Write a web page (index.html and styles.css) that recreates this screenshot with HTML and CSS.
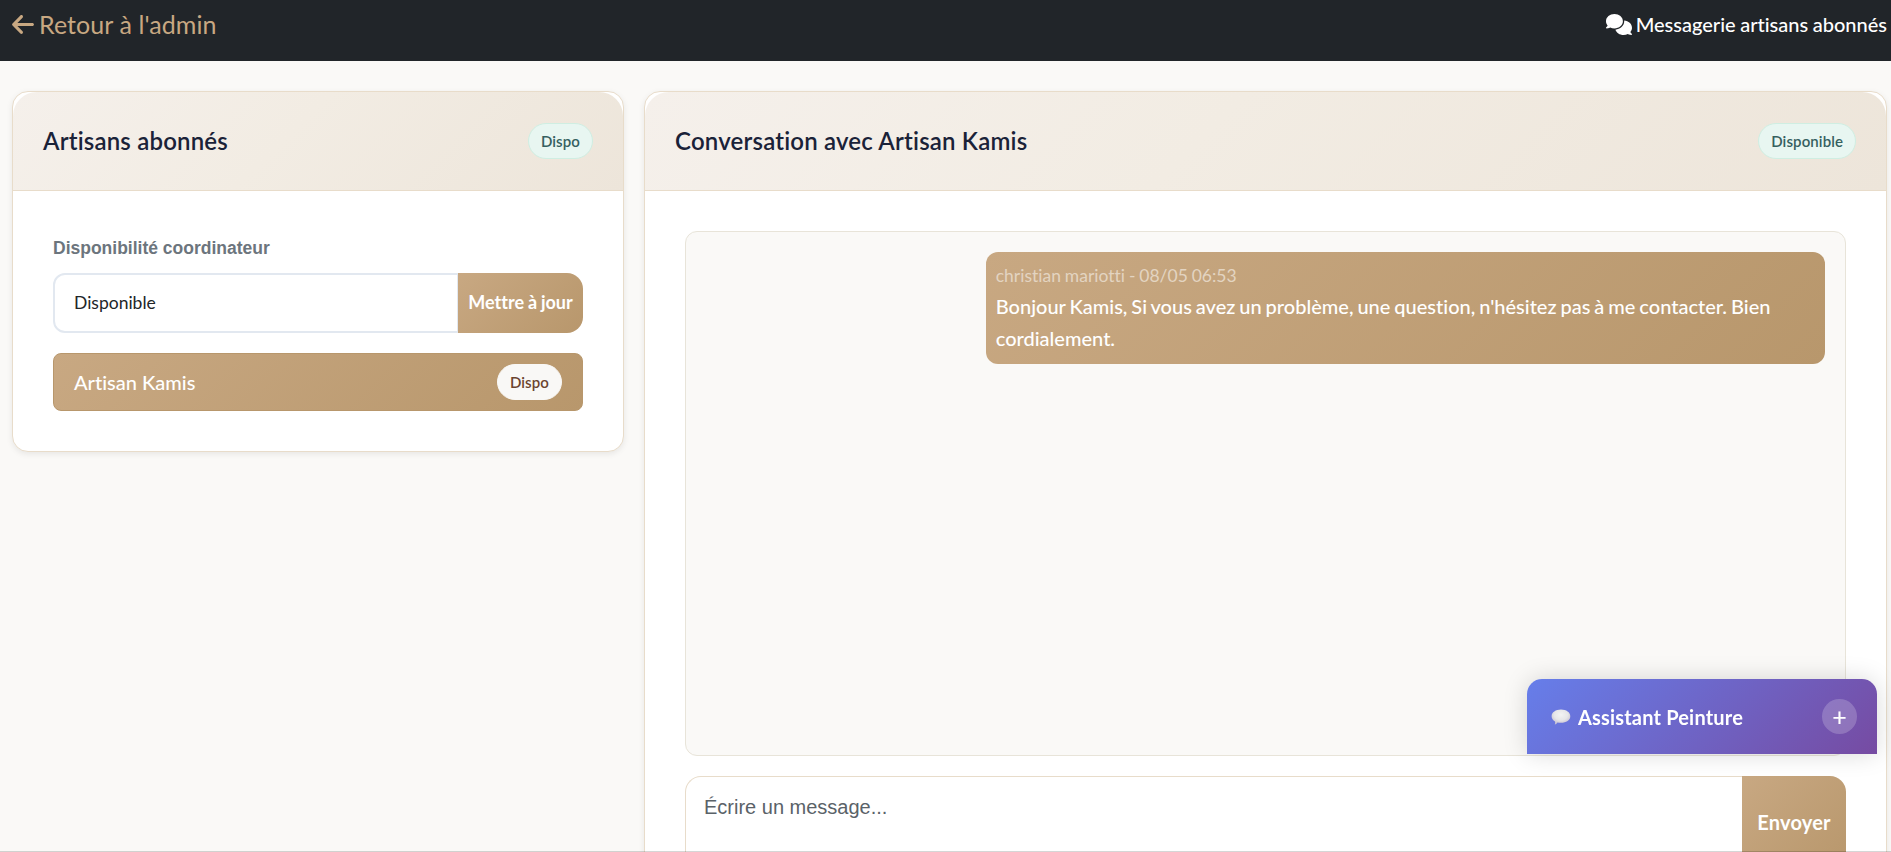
FILE: index.html
```
<!DOCTYPE html>
<html lang="fr">
<head>
  <meta charset="UTF-8">
  <title>Messagerie artisans abonnés</title>
  <link rel="stylesheet" href="styles.css">
</head>
<body>

  <nav class="navbar">
    <a class="navbar-brand" href="#">
      <svg class="icon-arrow" viewBox="0 0 448 512" fill="currentColor"><path d="M9.4 233.4c-12.5 12.5-12.5 32.8 0 45.3l160 160c12.5 12.5 32.8 12.5 45.3 0s12.5-32.8 0-45.3L109.2 288 416 288c17.7 0 32-14.3 32-32s-14.3-32-32-32l-306.7 0L214.6 118.6c12.5-12.5 12.5-32.8 0-45.3s-32.8-12.5-45.3 0l-160 160z"/></svg>
      <span>Retour à l'admin</span>
    </a>
    <div class="navbar-text">
      <svg class="icon-comments" viewBox="0 0 640 512" fill="currentColor"><path d="M208 352c114.900 0 208-78.800 208-176S322.900 0 208 0S0 78.800 0 176c0 38.600 14.700 74.300 39.600 103.400c-3.500 9.400-8.700 17.700-14.200 24.700c-4.800 6.200-9.700 11-13.300 14.300c-1.800 1.600-3.300 2.900-4.300 3.700c-.5 .4-.9 .7-1.100 .8l-.2 .2C1 327.200-1.400 334.400 .8 340.900S9.100 352 16 352c21.800 0 43.800-5.600 62.100-12.500c9.200-3.500 17.800-7.400 25.200-11.400C134.100 343.300 169.800 352 208 352zM448 176c0 112.300-99.100 196.900-216.500 207C255.800 457.400 336.400 512 432 512c38.200 0 73.900-8.700 104.700-23.900c7.500 4 16 7.900 25.200 11.400c18.300 6.900 40.300 12.500 62.100 12.500c6.900 0 13.100-4.500 15.200-11.100c2.100-6.600-.2-13.800-5.800-17.900l-.2-.2c-.2-.2-.6-.4-1.100-.8c-1-.8-2.500-2-4.300-3.700c-3.600-3.300-8.500-8.100-13.300-14.300c-5.500-7-10.700-15.400-14.200-24.700c24.900-29 39.600-64.700 39.600-103.400c0-92.800-84.900-168.900-192.600-175.500c.4 5.100 .6 10.300 .6 15.500z"/></svg>
      <span>Messagerie artisans abonnés</span>
    </div>
  </nav>

  <main class="layout">
    <section class="card card-artisans">
      <div class="card-header">
        <h2>Artisans abonnés</h2>
        <span class="badge">Dispo</span>
      </div>
      <div class="card-body">
        <div class="form-label">Disponibilité coordinateur</div>
        <div class="input-group">
          <div class="select">Disponible</div>
          <button class="btn btn-update">Mettre à jour</button>
        </div>
        <a class="list-item" href="#">
          <span>Artisan Kamis</span>
          <span class="badge badge-light">Dispo</span>
        </a>
      </div>
    </section>

    <section class="card card-chat">
      <div class="card-header">
        <h2>Conversation avec Artisan Kamis</h2>
        <span class="badge">Disponible</span>
      </div>
      <div class="card-body">
        <div class="chat-box">
          <div class="message">
            <div class="message-meta">christian mariotti - 08/05 06:53</div>
            <div>Bonjour Kamis, Si vous avez un problème, une question, n'hésitez pas à me contacter. Bien cordialement.</div>
          </div>
        </div>
        <div class="composer">
          <textarea class="composer-input" placeholder="Écrire un message..."></textarea>
          <button class="btn btn-send">Envoyer</button>
        </div>
      </div>
    </section>
  </main>

  <!-- Widget assistant -->
  <div class="assistant">
    <div class="assistant-title">
      <svg class="icon-bubble" viewBox="0 0 20 16">
        <defs>
          <radialGradient id="bubble" cx="0.5" cy="0.35" r="0.6">
            <stop offset="0" stop-color="#f3f3f3"/>
            <stop offset="0.6" stop-color="#e6e6e8"/>
            <stop offset="1" stop-color="#c9c3d3"/>
          </radialGradient>
        </defs>
        <path fill="url(#bubble)" d="M10 .5C15.300 .5 19.300 3.300 19.300 7.200S15.300 13.800 10 13.800C8.700 13.800 7.500 13.700 6.400 13.400C5.900 14.500 5 15.200 3.800 15.600C4.200 14.700 4.300 13.600 4 12.500C1.900 11.300 .6 9.400 .6 7.200C.6 3.300 4.700 .5 10 .5z"/>
      </svg>
      <span>Assistant Peinture</span>
    </div>
    <button class="assistant-toggle">+</button>
  </div>

</body>
</html>
```
FILE: styles.css
```
* {
  box-sizing: border-box;
}

html {
  height: 100%;
  overflow: hidden;
}

body {
  margin: 0;
  height: 100%;
  overflow: hidden;
  background: #faf9f7;
  color: #212529;
  font-family: Lato, sans-serif;
  font-size: 20px;
  font-variant-ligatures: none;
  line-height: 1.6;
}

/* filet en bas de la fenêtre */
body::after {
  content: "";
  position: fixed;
  left: 0;
  right: 0;
  bottom: 0;
  height: 1px;
  background: rgba(0, 0, 0, 0.16);
}

.navbar {
  display: flex;
  justify-content: space-between;
  height: 61px;
  padding: 4px 4px 0 12px;
  background: #212529;
}

.navbar-brand,
.navbar-text {
  display: flex;
  align-items: center;
  height: 40px;
}

.navbar-brand {
  gap: 5px;
  color: #c8a882;
  font-size: 25px;
  letter-spacing: 0.07px;
  text-decoration: none;
}

.navbar-text {
  gap: 4px;
  color: #fff;
  font-weight: 500;
  word-spacing: -0.5px;
}

.icon-arrow {
  width: 22px;
  height: 25px;
  margin-top: 1px;
}

.icon-comments {
  width: 26px;
  height: 21px;
  margin-top: 1px;
}

.layout {
  display: grid;
  grid-template-columns: 612px 1243px;
  align-items: start;
  gap: 20px;
  padding: 30px 0 0 12px;
}

.card {
  background: #fff;
  border: 1px solid #e8dcca;
  border-radius: 16px;
  box-shadow: 0 2px 6px rgba(0, 0, 0, 0.08);
}

.card-header {
  display: flex;
  justify-content: space-between;
  align-items: center;
  height: 99px;
  padding: 0 30px;
  background: linear-gradient(135deg, #f5f0eb 0%, #f2ece3 45%, #ede5da 100%);
  border-bottom: 1px solid #e8dcca;
  border-radius: 24px 24px 0 0;
}

.card-header h2 {
  margin: 0;
  color: #1a2238;
  font-size: 24px;
  font-weight: 600;
  letter-spacing: 0.19px;
}

.card-body {
  padding: 40px;
}

.badge {
  height: 36px;
  padding: 0 12px;
  background: #e8f6f1;
  border: 1px solid #cfeee2;
  border-radius: 18px;
  color: #35605f;
  font-size: 15px;
  font-weight: 600;
  letter-spacing: 0.1px;
  line-height: 34px;
}

.badge-light {
  background: #f9f8f6;
  border-color: #f9f8f6;
  color: #6b442f;
}

.form-label {
  height: 42px;
  padding-top: 3px;
  color: #6c757d;
  font: bold 17.5px/28px "Liberation Sans", sans-serif;
}

.input-group {
  display: flex;
  height: 60px;
  margin-bottom: 20px;
}

.select {
  flex: 1;
  padding: 0 19px;
  border: 2px solid #e2e8f0;
  border-right-width: 1px;
  border-radius: 12px 0 0 12px;
  font-size: 17.5px;
  line-height: 56px;
}

.btn {
  padding: 0;
  background: linear-gradient(135deg, #c8a882 0%, #b8976c 100%);
  border: none;
  color: #fff;
  font-family: Lato, sans-serif;
  font-variant-ligatures: none;
  font-weight: 700;
}

.btn-update {
  width: 125px;
  padding-bottom: 2px;
  border-radius: 0 16px 16px 0;
  font-size: 18px;
  word-spacing: -0.5px;
}

.list-item {
  display: flex;
  justify-content: space-between;
  align-items: center;
  height: 58px;
  padding: 0 20px;
  background: linear-gradient(135deg, #c8a882 0%, #b8976c 100%);
  border: 1px solid #b8976c;
  border-radius: 8px;
  color: #fff;
  font-weight: 500;
  text-decoration: none;
}

.chat-box {
  height: 525px;
  margin-bottom: 20px;
  padding: 20px;
  background: #faf9f7;
  border: 1px solid #e8e4d9;
  border-radius: 12px;
}

.message {
  width: 75%;
  margin-left: auto;
  padding: 10px;
  background: linear-gradient(135deg, #c8a882 0%, #b8976c 100%);
  border-radius: 12px;
  color: #fff;
  font-weight: 500;
  word-spacing: -1.1px;
}

.message-meta {
  color: #e3d4c1;
  font-size: 17.5px;
  font-weight: 400;
  word-spacing: -0.6px;
}

.composer {
  display: flex;
  height: 92px;
}

.composer-input {
  flex: 1;
  padding: 14px 18px;
  background: #fff;
  border: 1px solid #e8dcca;
  border-right: none;
  border-radius: 16px 0 0 16px;
  font: 20px/32px "Liberation Sans", sans-serif;
  resize: none;
}

.composer-input::placeholder {
  color: #5a6268;
}

.btn-send {
  width: 104px;
  border-radius: 0 16px 16px 0;
  font-size: 20px;
  letter-spacing: 0.2px;
}

.assistant {
  position: fixed;
  right: 14px;
  bottom: 98px;
  display: flex;
  justify-content: space-between;
  align-items: center;
  width: 350px;
  height: 75px;
  padding: 0 20px 0 24px;
  background: linear-gradient(135deg, #667eea 0%, #764ba2 100%);
  border-radius: 15px 15px 0 0;
  box-shadow: 0 0 25px rgba(0, 0, 0, 0.15);
  color: #fff;
}

.assistant-title {
  display: flex;
  align-items: center;
  gap: 7px;
  font-weight: 700;
  letter-spacing: 0.18px;
}

.icon-bubble {
  width: 20px;
  height: 16px;
}

.assistant-toggle {
  width: 35px;
  height: 35px;
  padding: 0;
  background: rgba(255, 255, 255, 0.2);
  border: none;
  border-radius: 50%;
  color: #fff;
  font: 500 25px/35px Lato, sans-serif;
}
```
